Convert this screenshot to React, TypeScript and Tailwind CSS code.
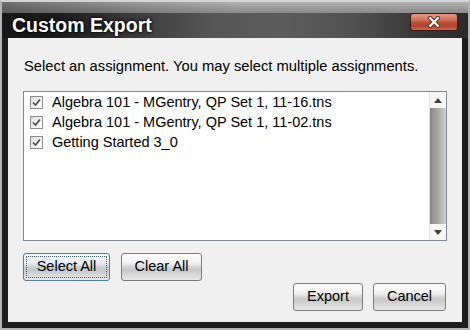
import React from 'react';

const items = [
  'Algebra 101 - MGentry, QP Set 1, 11-16.tns',
  'Algebra 101 - MGentry, QP Set 1, 11-02.tns',
  'Getting Started 3_0',
];

function CheckBox() {
  return (
    <span className="w-[13px] h-[13px] shrink-0 border border-[#8f8f8f] bg-[linear-gradient(135deg,#dcdcdc_0%,#f4f4f4_60%,#ffffff_100%)] flex items-center justify-center">
      <svg width="11" height="11" viewBox="0 0 11 11">
        <path d="M2 5.5 L4.5 8 L9 2.5" fill="none" stroke="#505050" strokeWidth="1.7" />
      </svg>
    </span>
  );
}

function Button({ label, width, focused }: { label: string; width: string; focused?: boolean }) {
  return (
    <button
      className={`${width} h-[28px] relative rounded-[3px] border text-[14.5px] text-black ${
        focused
          ? 'border-[#4f7ea6] bg-[linear-gradient(to_bottom,#f4f8fb_0%,#e8eef2_35%,#c9cdd0_52%,#c6c9cc_62%,#e6eaec_100%)]'
          : 'border-[#7c7c7c] bg-[linear-gradient(to_bottom,#fdfdfd_0%,#f1f1f1_35%,#d2d2d2_52%,#c9c9c9_62%,#e8e8e8_100%)]'
      }`}
    >
      {focused && (
        <span className="absolute inset-[2px] border border-dotted border-[#3a5a78] rounded-[1px]" />
      )}
      <span className="relative">{label}</span>
    </button>
  );
}

export default function App() {
  return (
    <div
      className="w-[470px] h-[330px] flex flex-col border-2 border-[#b4b4b4] border-t-[#d4d4d4] bg-[#1e1e1e] overflow-hidden"
      style={{ fontFamily: '"Liberation Sans", Arial, sans-serif' }}
    >
      {/* title bar */}
      <div className="h-[11px] shrink-0 bg-[linear-gradient(to_right,rgba(30,30,30,0.45)_0%,rgba(30,30,30,0.15)_30%,rgba(30,30,30,0)_50%),linear-gradient(to_bottom,#b2b2b2_0%,#9c9c9c_50%,#8a8a8a_100%)]" />
      <div className="h-[25px] shrink-0 flex justify-between bg-[linear-gradient(to_right,#181818_0%,#1c1c1c_12%,#3e3e3e_30%,#565656_45%,#5c5c5c_60%,#525252_75%,#3a3a3a_88%,#2a2a2a_100%)]">
        <span className="pl-[10px] pt-[2px] text-white font-bold text-[19.5px] leading-[20px] [text-shadow:0_0_4px_#000,0_0_2px_#000]">
          Custom Export
        </span>
        <div className="mr-[10px] w-[48px] h-[18px] rounded-[3px] border border-[#3a1810] bg-[linear-gradient(to_bottom,#e29a88_0%,#d06c56_40%,#bc4a30_55%,#b4442c_75%,#cc6a50_100%)] flex items-center justify-center">
          <svg width="14" height="12" viewBox="0 0 14 12">
            <path d="M3 2 L11 10 M11 2 L3 10" stroke="#5a2418" strokeWidth="4" strokeLinecap="round" />
            <path d="M3 2 L11 10 M11 2 L3 10" stroke="#ffffff" strokeWidth="2.4" strokeLinecap="round" />
          </svg>
        </div>
      </div>

      {/* content */}
      <div className="flex-1 mx-[6px] mb-[6px] bg-[#f0f0f0] flex flex-col pl-[15px] pr-[15px] pt-[20px] text-[14.5px] text-black">
        <p className="pl-[1px] h-[17px] leading-[17px] text-[14.75px]">
          Select an assignment. You may select multiple assignments.
        </p>

        <div className="mt-[16px] h-[150px] border border-[#828790] bg-white flex">
          <div className="flex-1 flex flex-col">
            {items.map((item) => (
              <div key={item} className="h-[20px] flex items-center pl-[6px] gap-[9px]">
                <CheckBox />
                <span className="leading-[20px]">{item}</span>
              </div>
            ))}
          </div>
          <div className="w-[17px] flex flex-col border-l border-[#e4e4e4]">
            <div className="h-[16px] bg-[#f6f6f6] flex items-center justify-center">
              <svg width="8" height="5" viewBox="0 0 8 5">
                <path d="M0 5 L4 0 L8 5 Z" fill="#404040" />
              </svg>
            </div>
            <div className="flex-1 bg-[linear-gradient(to_right,#7e7e7e_0%,#929292_15%,#a2a2a2_40%,#b4b4b4_65%,#c4c4c4_85%,#d2d2d2_100%)]" />
            <div className="h-[16px] bg-[#f6f6f6] flex items-center justify-center">
              <svg width="8" height="5" viewBox="0 0 8 5">
                <path d="M0 0 L4 5 L8 0 Z" fill="#404040" />
              </svg>
            </div>
          </div>
        </div>

        <div className="mt-[12px] flex gap-[11px]">
          <Button label="Select All" width="w-[87px]" focused />
          <Button label="Clear All" width="w-[81px]" />
        </div>

        <div className="mt-[2px] flex justify-end gap-[10px] mr-[1px]">
          <Button label="Export" width="w-[70px]" />
          <Button label="Cancel" width="w-[73px]" />
        </div>
      </div>
    </div>
  );
}
